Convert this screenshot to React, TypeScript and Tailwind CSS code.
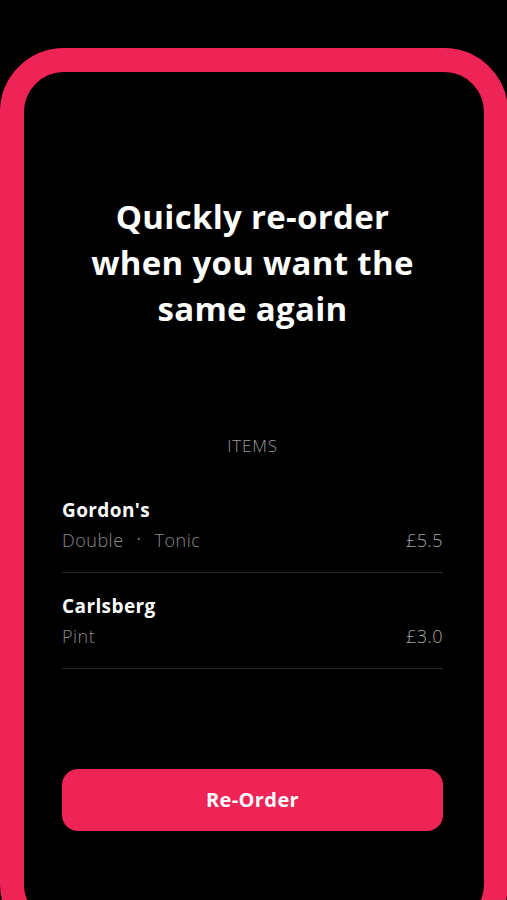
const items = [
  { name: "Gordon's", options: ["Double", "Tonic"], price: "£5.5" },
  { name: "Carlsberg", options: ["Pint"], price: "£3.0" },
];

export default function App() {
  return (
    <div className="h-[900px] w-[507px] overflow-hidden bg-black pt-[48px] font-['Open_Sans',sans-serif]">
      <div className="h-[900px] w-[508px] rounded-[64px] border-[24px] border-[#ef2456] bg-black pl-[38px] pr-[41px] pt-[122px]">
        <h1 className="text-center text-[33px] font-bold leading-[46px] tracking-[0.3px] text-white">
          Quickly re-order
          <br />
          when you want the
          <br />
          same again
        </h1>

        <p className="mt-[102px] text-center text-[17px] font-light leading-[24px] tracking-[0.8px] text-[#9a9a9a]">ITEMS</p>

        <div className="mt-[19px]">
          {items.map((item) => (
            <div key={item.name} className="border-b border-[#262626] pb-[20px] pt-[21px]">
              <p className="text-[19px] font-bold leading-[24px] tracking-[0.4px] text-white">{item.name}</p>
              <div className="mt-[6px] flex items-center justify-between text-[18px] font-light leading-[24px] tracking-[0.5px] text-[#8a8a8a]">
                <span className="flex items-center gap-[13px]">
                  {item.options.map((o, i) => (
                    <span key={o} className="flex items-center gap-[13px]">
                      {i > 0 && <span className="text-[12px]">•</span>}
                      {o}
                    </span>
                  ))}
                </span>
                <span className="text-[#a6a6a6]">{item.price}</span>
              </div>
            </div>
          ))}
        </div>

        <button className="mt-[100px] h-[62px] w-full rounded-[16px] bg-[#ef2456] text-[20px] font-bold tracking-[0.4px] text-white">
          Re-Order
        </button>
      </div>
    </div>
  );
}
